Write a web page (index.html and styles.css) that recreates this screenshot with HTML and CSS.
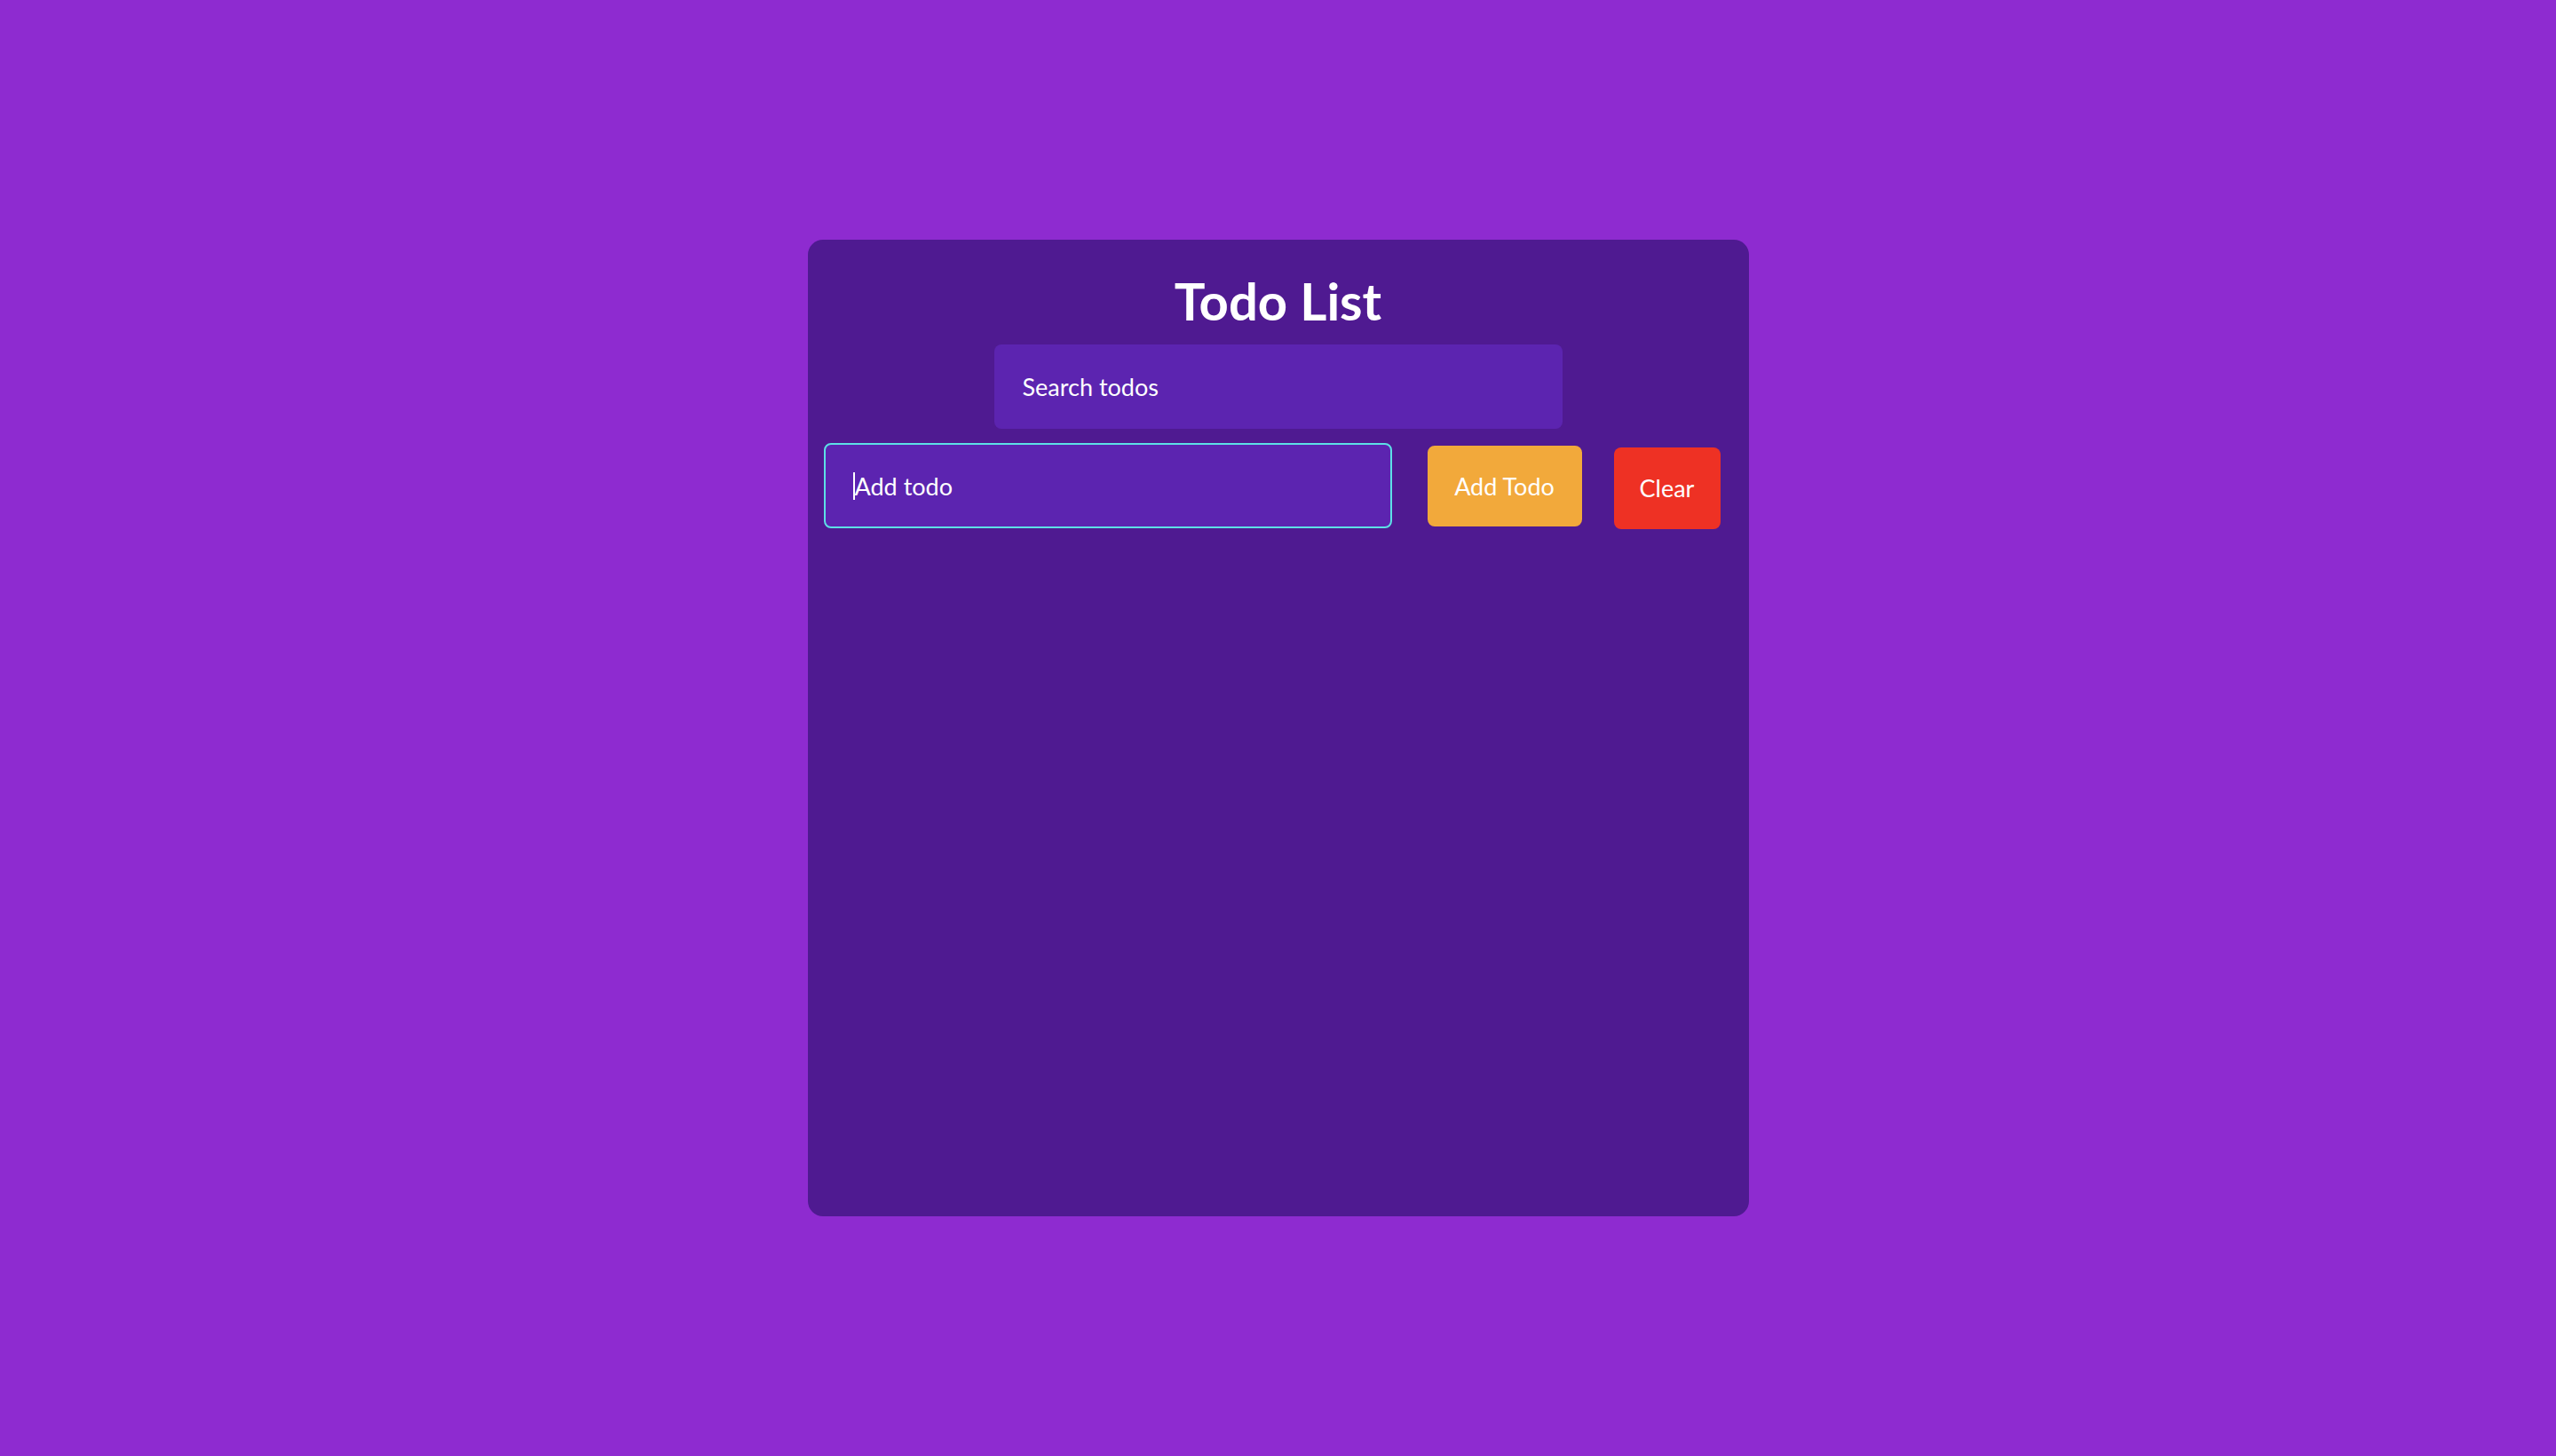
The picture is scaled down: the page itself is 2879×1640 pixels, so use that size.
FILE: index.html
```html
<!DOCTYPE html>
<html lang="en">
<head>
<meta charset="utf-8">
<title>Todo List</title>
<link rel="stylesheet" href="styles.css">
</head>
<body>
<main class="card">
  <h1 class="title">Todo List</h1>
  <input class="search" type="text" placeholder="Search todos">
  <form class="add-row">
    <div class="add-input"><span class="caret"></span><span class="ph">Add todo</span></div>
    <button type="button" class="btn btn-add">Add Todo</button>
    <button type="button" class="btn btn-clear">Clear</button>
  </form>
</main>
</body>
</html>
```
FILE: styles.css
```css
* { box-sizing: border-box; }
html, body { margin: 0; padding: 0; }
body {
  background: #8e2bd0;
  min-height: 1640px;
  font-family: Lato, "Open Sans", sans-serif;
  display: flex;
  justify-content: center;
  align-items: flex-start;
}
.card {
  margin-top: 270px;
  width: 1060px;
  height: 1100px;
  background: #4f1a91;
  border-radius: 17px;
  padding: 34px 18px 0;
  display: flex;
  flex-direction: column;
  align-items: center;
}
.title {
  margin: 0;
  font-size: 58px;
  line-height: 1.2;
  font-weight: 700;
  color: #ffffff;
}
.search {
  margin-top: 14px;
  width: 640px;
  height: 95px;
  border: none;
  outline: none;
  border-radius: 8px;
  background: #5c24b0;
  padding: 0 32px;
  font-family: inherit;
  font-size: 27px;
  color: #ffffff;
}
.search::placeholder { color: #ffffff; opacity: 1; }
.add-row {
  margin: 16px 0 0;
  align-self: stretch;
  display: flex;
  align-items: center;
}
.add-input {
  width: 640px;
  height: 96px;
  border: 2px solid #5ddfe6;
  border-radius: 8px;
  background: #5c24b0;
  display: flex;
  align-items: center;
  padding-left: 31px;
  font-size: 27px;
  color: #ffffff;
}
.caret {
  display: inline-block;
  width: 2px;
  height: 31px;
  background: #ffffff;
}
.btn {
  border: none;
  border-radius: 8px;
  color: #ffffff;
  font-family: inherit;
  font-size: 27px;
  padding: 0;
  cursor: pointer;
}
.btn-add {
  margin-left: 40px;
  width: 174px;
  height: 91px;
  background: #f2a93b;
}
.btn-clear {
  margin-left: 36px;
  margin-top: 5px;
  width: 120px;
  height: 92px;
  background: #ee3124;
}
```
